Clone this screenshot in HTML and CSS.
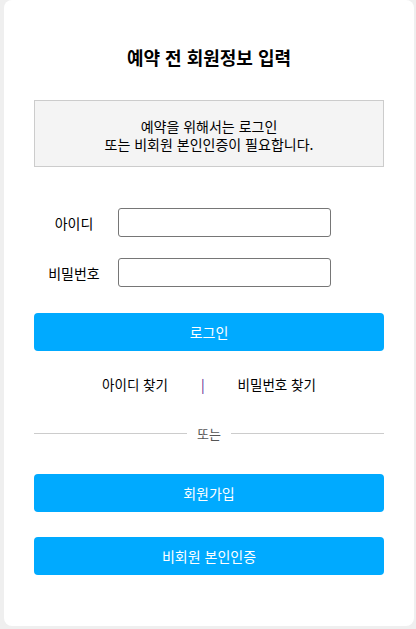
FILE: index.html
```html
<!DOCTYPE html>
<html lang="ko">
<head>
    <meta charset="UTF-8">
    <meta name="viewport" content="width=device-width, initial-scale=1.0">
    <title>예약 전 회원정보 입력</title>
    <link rel="stylesheet" href="styles.css">
</head>
<body>
    <div class="card">
        <h2 class="title">예약 전 회원정보 입력</h2>

        <div class="notice">
            예약을 위해서는 로그인<br>
            또는 비회원 본인인증이 필요합니다.
        </div>

        <form class="login-form">
            <div class="row">
                <label for="userId">아이디</label>
                <input type="text" id="userId">
            </div>
            <div class="row">
                <label for="userPw">비밀번호</label>
                <input type="password" id="userPw">
            </div>
            <button type="submit" class="btn btn-login">로그인</button>
        </form>

        <div class="find-links">
            <a href="#">아이디 찾기</a>
            <span class="sep">|</span>
            <a href="#">비밀번호 찾기</a>
        </div>

        <div class="divider"><span>또는</span></div>

        <button type="button" class="btn btn-join">회원가입</button>
        <button type="button" class="btn btn-guest">비회원 본인인증</button>
    </div>
</body>
</html>
```

FILE: styles.css
```css
body {
    margin: 0;
    padding: 0 2px 3px 4px;
    background: #efefef;
    font-family: "Noto Sans CJK KR", "Noto Sans", sans-serif;
    color: #000;
}

.card {
    background: white;
    border-radius: 8px;
    padding: 0 30px 51px;
}

.title {
    margin: 0;
    padding-top: 45px;
    font-size: 18px;
    line-height: 24px;
    text-align: center;
    font-weight: bold;
}

.notice {
    margin-top: 31px;
    padding: 16px 10px 13px;
    background: #f4f4f4;
    border: 1px solid #cccccc;
    text-align: center;
    font-size: 14px;
    line-height: 18px;
}

.login-form {
    margin: 41px 0 0;
}

.row {
    display: flex;
    align-items: center;
    margin-bottom: 21px;
}

.row label {
    width: 80px;
    text-align: center;
    font-size: 14px;
    margin-right: 4px;
}

.row input {
    width: 213px;
    height: 29px;
    box-sizing: border-box;
    border: 1px solid #767676;
    border-radius: 3px;
    padding: 0 6px;
    font-size: 14px;
}

.row:last-of-type {
    margin-bottom: 26px;
}

.btn {
    display: block;
    width: 100%;
    height: 38px;
    border: none;
    border-radius: 4px;
    background: #00aaff;
    color: white;
    font-family: inherit;
    font-size: 14px;
    cursor: pointer;
}

.find-links {
    margin-top: 23px;
    height: 20px;
    display: flex;
    justify-content: center;
    align-items: center;
    font-size: 13.5px;
}

.find-links a {
    color: #000;
    text-decoration: none;
}

.find-links .sep {
    color: #551a8b;
    margin: 0 33px;
}

.divider {
    margin-top: 29px;
    height: 20px;
    display: flex;
    align-items: center;
    gap: 10px;
    font-size: 13px;
    color: #555;
}

.divider::before,
.divider::after {
    content: "";
    flex: 1;
    border-top: 1px solid #cccccc;
}

.btn-join {
    margin-top: 31px;
}

.btn-guest {
    margin-top: 25px;
}
```
